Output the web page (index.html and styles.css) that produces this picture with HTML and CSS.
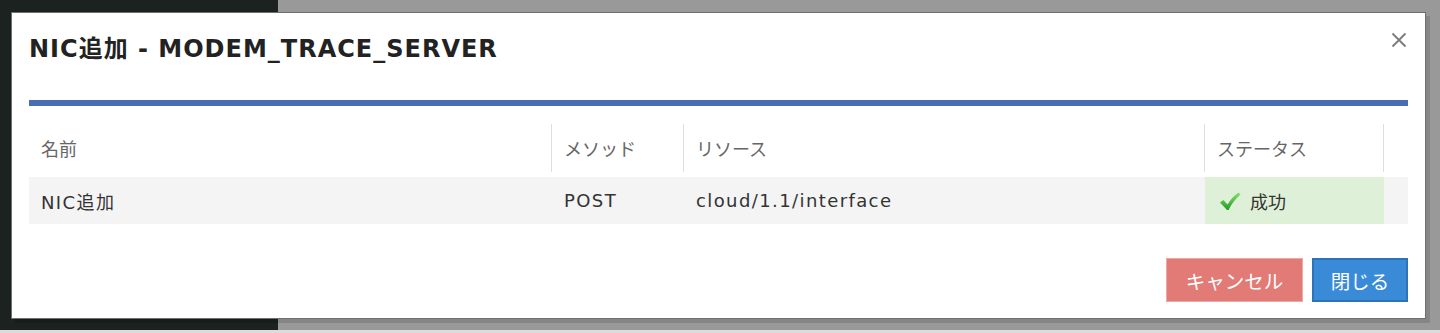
FILE: index.html
```html
<!doctype html>
<html lang="ja">
  <head>
    <meta charset="UTF-8" />
    <title>NIC追加</title>
    <link rel="stylesheet" href="styles.css">
  </head>
  <body>
    <div class="page">
      <div class="sidebar"></div>
      <div class="main"></div>
    </div>

    <div class="modal">
      <div class="modal-header">
        <h1>NIC追加 - MODEM_TRACE_SERVER</h1>
        <svg class="close" width="16" height="16" viewBox="0 0 16 16">
          <path d="M1.5 1.5 L14.5 14.5 M14.5 1.5 L1.5 14.5" stroke="#7a7a7a" stroke-width="1.8" />
        </svg>
      </div>
      <div class="bar"></div>

      <div class="table">
        <div class="row head">
          <div class="cell">名前</div>
          <div class="cell">メソッド</div>
          <div class="cell">リソース</div>
          <div class="cell">ステータス</div>
          <div class="cell"></div>
        </div>
        <div class="row body">
          <div class="cell">NIC追加</div>
          <div class="cell">POST</div>
          <div class="cell">cloud/1.1/interface</div>
          <div class="cell ok">
            <svg class="check" width="22" height="20" viewBox="0 0 22 20">
              <defs>
                <linearGradient id="g" x1="0" y1="0" x2="0" y2="1">
                  <stop offset="0" stop-color="#8be070" />
                  <stop offset="1" stop-color="#1f9b22" />
                </linearGradient>
              </defs>
              <path d="M1 11.5 Q3 9.5 4.5 9 L8.5 13.5 Q13 6 19.5 1.5 L21.5 3.5 Q14 10 9.5 19 L8 19 Z" fill="url(#g)" />
            </svg>
            成功
          </div>
          <div class="cell"></div>
        </div>
      </div>

      <div class="modal-footer">
        <button class="btn cancel">キャンセル</button>
        <button class="btn primary">閉じる</button>
      </div>
    </div>
  </body>
</html>
```

FILE: styles.css
```css
* {
  box-sizing: border-box;
  margin: 0;
  padding: 0;
}
body {
  font-family: "DejaVu Sans", "Noto Sans CJK JP", sans-serif;
  width: 1440px;
  height: 333px;
  overflow: hidden;
  background: #dcdcdc;
  position: relative;
}
.page {
  display: flex;
  height: 330px;
}
.sidebar {
  width: 278px;
  background: #1b2220;
}
.main {
  flex: 1;
  background: #999;
}
/* the dialog sits over the page */
.modal {
  position: absolute;
  left: 11px;
  top: 12px;
  width: 1415px;
  height: 307px;
  background: #fff;
  border: 1px solid #6f6f6f;
  box-shadow: 4px 4px 0 rgba(0, 0, 0, 0.12);
}
.modal-header {
  height: 87px;
  padding: 0 17px;
  display: flex;
  align-items: center;
  justify-content: space-between;
}
.modal-header h1 {
  font-size: 24px;
  font-weight: bold;
  letter-spacing: 1px;
  color: #222;
  margin-top: -20px;
}
.close {
  margin-top: -34px;
  margin-right: 1px;
}
.bar {
  margin: 0 17px;
  height: 6px;
  background: #4a6cb8;
}
.table {
  margin: 18px 17px 0;
}
.row {
  display: grid;
  grid-template-columns: 523px 132px 521px 179px 26px;
}
.row .cell {
  display: flex;
  align-items: center;
  padding-left: 12px;
}
.head {
  height: 48px;
  margin-bottom: 5px;
  color: #666;
  font-size: 18px;
}
.head .cell {
  border-right: 1px solid #dedede;
}
.head .cell:last-child {
  border-right: none;
}
.body {
  height: 47px;
  background: #f4f4f4;
  color: #333;
  font-size: 18px;
  letter-spacing: 1.4px;
}
.body .ok {
  background: #dff0d8;
  padding-left: 14px;
  gap: 9px;
  letter-spacing: 0;
}
.modal-footer {
  display: flex;
  justify-content: flex-end;
  gap: 9px;
  padding: 34px 17px 0;
}
.btn {
  font-family: inherit;
  height: 44px;
  border: 1px solid transparent;
  color: #fff;
  font-size: 19.5px;
  cursor: pointer;
}
.cancel {
  width: 137px;
  background: #e27a75;
  border-color: #f0a8a4;
}
.primary {
  width: 96px;
  background: #3a8bd7;
  border: 2px solid #2f73b6;
}
```
